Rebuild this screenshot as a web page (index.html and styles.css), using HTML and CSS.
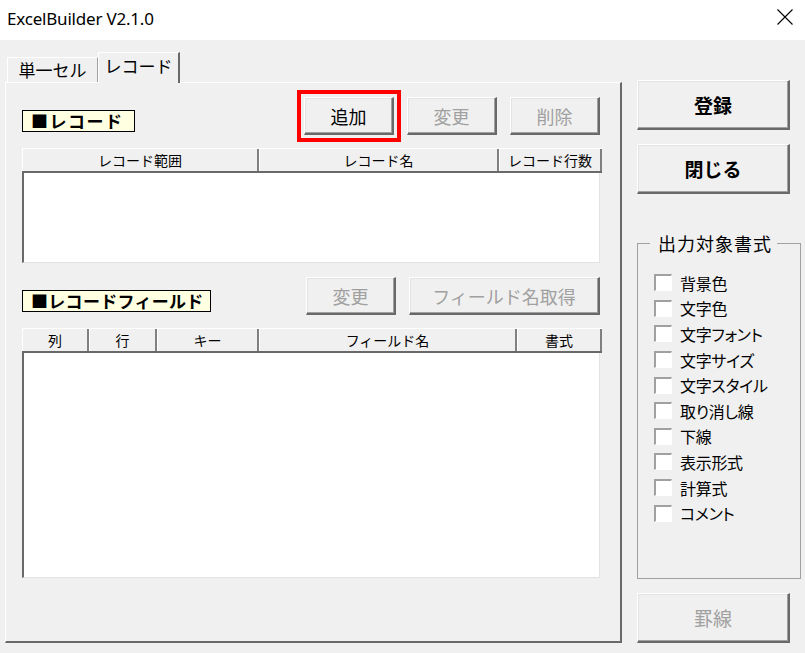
FILE: index.html
```html
<!DOCTYPE html>
<html lang="ja">
<head>
    <meta charset="UTF-8">
    <title>ExcelBuilder V2.1.0</title>
<link rel="stylesheet" href="styles.css">
</head>
<body>
<div class="titlebar">
    <span class="title">ExcelBuilder V2.1.0</span>
    <svg class="close" width="18" height="18" viewBox="0 0 18 18"><path d="M1.5 1.5L16.5 16.5M16.5 1.5L1.5 16.5" stroke="#000" stroke-width="1.1" fill="none"/></svg>
</div>

<div class="window">
    <!-- tab control -->
    <div class="tabctl">
        <div class="tabs">
            <div class="tab">単一セル</div>
            <div class="tab active">レコード</div>
        </div>
        <div class="panel">
            <div class="sec-row">
                <div class="sec-label rec">■レコード</div>
                <div class="btns">
                    <button class="btn small marked">追加</button>
                    <button class="btn small" disabled>変更</button>
                    <button class="btn small" disabled>削除</button>
                </div>
            </div>
            <div class="listview">
                <div class="lv-head rec">
                    <div class="col">レコード範囲</div>
                    <div class="col">レコード名</div>
                    <div class="col">レコード行数</div>
                </div>
                <div class="lv-body rec"></div>
            </div>

            <div class="sec-row second">
                <div class="sec-label fld">■レコードフィールド</div>
                <div class="btns">
                    <button class="btn small" disabled>変更</button>
                    <button class="btn wide" disabled>フィールド名取得</button>
                </div>
            </div>
            <div class="listview">
                <div class="lv-head fld">
                    <div class="col">列</div>
                    <div class="col">行</div>
                    <div class="col">キー</div>
                    <div class="col">フィールド名</div>
                    <div class="col">書式</div>
                </div>
                <div class="lv-body fld"></div>
            </div>
        </div>
    </div>

    <!-- right side -->
    <div class="side">
        <button class="btn big">登録</button>
        <button class="btn big">閉じる</button>
        <fieldset class="group">
            <legend>出力対象書式</legend>
            <label class="chk"><span class="box"></span>背景色</label>
            <label class="chk"><span class="box"></span>文字色</label>
            <label class="chk"><span class="box"></span>文字フォント</label>
            <label class="chk"><span class="box"></span>文字サイズ</label>
            <label class="chk"><span class="box"></span>文字スタイル</label>
            <label class="chk"><span class="box"></span>取り消し線</label>
            <label class="chk"><span class="box"></span>下線</label>
            <label class="chk"><span class="box"></span>表示形式</label>
            <label class="chk"><span class="box"></span>計算式</label>
            <label class="chk"><span class="box"></span>コメント</label>
        </fieldset>
        <button class="btn big ruled" disabled>罫線</button>
    </div>
</div>
</body>
</html>
```

FILE: styles.css
```css
:root {
  --face: #f0f0f0;
  --light: #ffffff;
  --shadow: #a0a0a0;
  --dark: #696969;
  --disabled: #a0a0a0;
}

body {
  margin: 0;
  width: 805px;
  height: 653px;
  overflow: hidden;
  background: var(--face);
  font-family: "Noto Sans CJK JP", sans-serif;
  color: #000;
}

/* title bar */
.titlebar {
  height: 40px;
  background: #fff;
  display: flex;
  align-items: center;
  justify-content: space-between;
  padding: 0 11px 0 7px;
}
.title {
  font-family: "Noto Sans", sans-serif;
  font-size: 17px;
  letter-spacing: -0.2px;
  margin-top: -4px;
}
.close {
  margin-top: -6px;
}

.window {
  display: flex;
  padding-left: 5px;
}

/* tabs */
.tabctl {
  width: 617px;
  margin-top: 12px;
}
.tabs {
  display: flex;
  align-items: flex-end;
  height: 30px;
  padding-left: 2px;
}
.tab {
  box-sizing: border-box;
  width: 91px;
  height: 25px;
  border-top: 1px solid var(--light);
  border-left: 1px solid var(--light);
  border-right: 1px solid var(--shadow);
  font-size: 17px;
  line-height: 23px;
  text-align: center;
}
.tab.active {
  width: 82px;
  height: 31px;
  margin-bottom: -1px;
  line-height: 26px;
  background: var(--face);
  border-right: 2px solid var(--dark);
  position: relative;
  z-index: 1;
}

.panel {
  box-sizing: border-box;
  height: 561px;
  border-top: 1px solid var(--light);
  border-left: 1px solid var(--light);
  border-right: 2px solid var(--dark);
  border-bottom: 2px solid var(--dark);
  padding: 14px 0 0 16px;
}

/* section rows */
.sec-row {
  width: 580px;
  height: 38px;
  display: flex;
  justify-content: space-between;
  align-items: flex-end;
}
.sec-row.second {
  margin-top: 14px;
}
.sec-label {
  box-sizing: border-box;
  height: 22px;
  margin-bottom: 3px;
  background: #ffffe1;
  border: 1px solid #000;
  font-size: 17px;
  font-weight: bold;
  line-height: 20px;
  padding-left: 8px;
  white-space: nowrap;
}
.sec-label.rec { width: 113px; letter-spacing: 1.5px; }
.sec-label.fld { width: 189px; letter-spacing: 0.3px; }

.btns {
  display: flex;
  gap: 13px;
  margin-right: 2px;
}

/* buttons */
.btn {
  box-sizing: border-box;
  padding: 0;
  background: var(--face);
  border-style: solid;
  border-width: 1px 2px 2px 1px;
  border-color: var(--light) var(--dark) var(--dark) var(--light);
  box-shadow: inset -1px -1px 0 var(--shadow), inset 1px 1px 0 #e3e3e3;
  font-family: "Noto Sans CJK JP", sans-serif;
  font-size: 18px;
  color: #000;
}
.btn:disabled {
  color: var(--disabled);
}
.btn.small {
  width: 90px;
  height: 38px;
}
.btn.wide {
  width: 191px;
  height: 38px;
}
.btn.marked {
  outline: 4px solid #ff0000;
  outline-offset: 3px;
}
.btn.big {
  width: 153px;
  height: 50px;
  font-size: 19px;
  font-weight: bold;
}
.btn.big + .btn.big {
  margin-top: 14px;
}
.btn.ruled {
  margin-top: 14px;
  font-weight: normal;
}

/* list views */
.listview {
  width: 580px;
  margin-top: 13px;
}
.lv-head {
  box-sizing: border-box;
  height: 25px;
  display: grid;
  border-top: 1px solid var(--light);
  border-bottom: 2px solid var(--dark);
}
.lv-head.rec { grid-template-columns: 237px 240px 1fr; }
.lv-head.fld { grid-template-columns: 67px 68px 102px 258px 1fr; }
.col {
  border-left: 1px solid var(--light);
  border-right: 2px solid #808080;
  font-size: 14px;
  line-height: 22px;
  text-align: center;
  white-space: nowrap;
}
.lv-body {
  box-sizing: border-box;
  width: 578px;
  background: #fff;
  border-left: 2px solid var(--dark);
  border-right: 1px solid #e3e3e3;
  border-bottom: 1px solid #e3e3e3;
}
.lv-body.rec { height: 90px; }
.lv-body.fld { height: 225px; }

/* right column */
.side {
  width: 164px;
  margin-left: 15px;
  margin-top: 40px;
  display: flex;
  flex-direction: column;
}
.group {
  margin: 37px 0 0;
  padding: 15px 0 52px 16px;
  border: 1px solid var(--shadow);
  min-width: 0;
}
.group legend {
  margin-left: -4px;
  padding: 0 5px 0 8px;
  font-size: 18px;
  line-height: 24px;
  letter-spacing: 1px;
}
.chk {
  display: flex;
  align-items: center;
  gap: 8px;
  height: 25.6px;
  font-size: 16px;
  font-feature-settings: "palt";
  letter-spacing: -0.3px;
  white-space: nowrap;
}
.box {
  box-sizing: border-box;
  width: 18px;
  height: 17px;
  background: #fff;
  border-style: solid;
  border-width: 2px 1px 1px 2px;
  border-color: #a0a0a0 #fff #fff #a0a0a0;
}
```
